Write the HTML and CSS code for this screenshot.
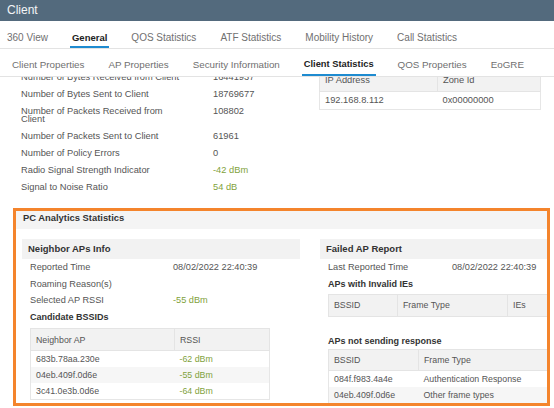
FILE: index.html
```html
<!DOCTYPE html>
<html lang="en">
<head>
<meta charset="utf-8">
<title>Client</title>
<link rel="stylesheet" href="styles.css">
</head>
<body>
<div class="app">
  <div class="titlebar">Client</div>
  <nav class="tabs tabs-main">
    <span class="tab">360 View</span>
    <span class="tab active">General</span>
    <span class="tab">QOS Statistics</span>
    <span class="tab">ATF Statistics</span>
    <span class="tab">Mobility History</span>
    <span class="tab">Call Statistics</span>
  </nav>
  <nav class="tabs tabs-sub">
    <span class="tab">Client Properties</span>
    <span class="tab">AP Properties</span>
    <span class="tab">Security Information</span>
    <span class="tab active">Client Statistics</span>
    <span class="tab">QOS Properties</span>
    <span class="tab">EoGRE</span>
  </nav>
  <div class="content">
    <div class="scroll">
      <div class="top">
        <dl class="stats">
          <div class="stat"><dt>Number of Bytes Received from Client</dt><dd>16441937</dd></div>
          <div class="stat"><dt>Number of Bytes Sent to Client</dt><dd>18769677</dd></div>
          <div class="stat"><dt>Number of Packets Received from Client</dt><dd>108802</dd></div>
          <div class="stat"><dt>Number of Packets Sent to Client</dt><dd>61961</dd></div>
          <div class="stat"><dt>Number of Policy Errors</dt><dd>0</dd></div>
          <div class="stat"><dt>Radio Signal Strength Indicator</dt><dd class="good">-42 dBm</dd></div>
          <div class="stat"><dt>Signal to Noise Ratio</dt><dd class="good">54 dB</dd></div>
        </dl>
        <table class="grid ip-table">
          <thead><tr><th class="c-ip">IP Address</th><th>Zone Id</th></tr></thead>
          <tbody><tr><td>192.168.8.112</td><td>0x00000000</td></tr></tbody>
        </table>
      </div>

      <section class="analytics">
        <div class="analytics-title">PC Analytics Statistics</div>
        <div class="panels">
          <div class="panel panel-left">
            <div class="panel-head">Neighbor APs Info</div>
            <div class="kv"><span class="k">Reported Time</span><span class="v">08/02/2022 22:40:39</span></div>
            <div class="kv"><span class="k">Roaming Reason(s)</span><span class="v"></span></div>
            <div class="kv"><span class="k">Selected AP RSSI</span><span class="v good">-55 dBm</span></div>
            <div class="sub">Candidate BSSIDs</div>
            <table class="grid cand-table">
              <thead><tr><th class="c-nap">Neighbor AP</th><th>RSSI</th></tr></thead>
              <tbody>
                <tr><td>683b.78aa.230e</td><td class="good">-62 dBm</td></tr>
                <tr><td>04eb.409f.0d6e</td><td class="good">-55 dBm</td></tr>
                <tr><td>3c41.0e3b.0d6e</td><td class="good">-64 dBm</td></tr>
              </tbody>
            </table>
          </div>
          <div class="panel panel-right">
            <div class="panel-head">Failed AP Report</div>
            <div class="kv"><span class="k">Last Reported Time</span><span class="v">08/02/2022 22:40:39</span></div>
            <div class="sub">APs with Invalid IEs</div>
            <table class="grid ie-table">
              <thead><tr><th class="c-b1">BSSID</th><th class="c-ft1">Frame Type</th><th>IEs</th></tr></thead>
              <tbody></tbody>
            </table>
            <div class="sub sub-2">APs not sending response</div>
            <table class="grid resp-table">
              <thead><tr><th class="c-b2">BSSID</th><th>Frame Type</th></tr></thead>
              <tbody>
                <tr><td>084f.f983.4a4e</td><td>Authentication Response</td></tr>
                <tr><td>04eb.409f.0d6e</td><td>Other frame types</td></tr>
              </tbody>
            </table>
          </div>
        </div>
      </section>
    </div>
  </div>
</div>
</body>
</html>
```

FILE: styles.css
```css
html, body {
  margin: 0;
  padding: 0;
  background: #ffffff;
}

body {
  font-family: "Liberation Sans", Arial, Helvetica, sans-serif;
  color: #555;
  width: 554px;
  height: 408px;
  overflow: hidden;
}

.titlebar {
  height: 21px;
  line-height: 21px;
  background: #536a7d;
  color: #f3f5f7;
  font-size: 12px;
  padding-left: 7px;
}

.tabs {
  display: flex;
  gap: 20px;
  border-bottom: 1px solid #e3e3e3;
}

.tabs-main {
  padding: 11px 0 0 5px;
}

.tabs-sub {
  padding: 10px 0 0 10px;
}

.tab {
  padding: 0 2px 3px;
  line-height: 11px;
  font-size: 10px;
  color: #707070;
  border-bottom: 2px solid transparent;
  white-space: nowrap;
}

.tabs-sub .tab {
  padding-bottom: 4px;
  font-size: 9.8px;
}

.tab.active {
  color: #222;
  font-weight: bold;
  font-size: 9.5px;
  border-bottom-color: #1e8bd0;
}

.tabs-sub .tab.active {
  font-size: 9.3px;
}

.content {
  display: flow-root;
  height: 331px;
  overflow: hidden;
  padding: 0 4px 0 13px;
}

.scroll {
  margin-top: -8.5px;
}

.top {
  display: flex;
  padding-left: 8px;
}

.stats {
  width: 298px;
  margin: 0;
}

.stat {
  display: grid;
  grid-template-columns: 165px 1fr;
  column-gap: 27px;
  padding: 4.5px 0;
  line-height: 8px;
  font-size: 9.3px;
  color: #555;
}

.stat dt,
.stat dd {
  margin: 0;
}

.good {
  color: #7fa23c;
}

/* tables */
.grid {
  border-collapse: collapse;
  font-size: 8.8px;
  color: #555;
  table-layout: fixed;
}

.grid th {
  background: #f2f2f2;
  font-weight: normal;
  text-align: left;
  height: 21px;
  padding: 0 5px;
  border: 1px solid #e4e4e4;
  white-space: nowrap;
}

.grid td {
  height: 16px;
  padding: 0 5px;
  white-space: nowrap;
}

.grid tbody tr {
  border-left: 1px solid #e6e6e6;
  border-right: 1px solid #e6e6e6;
}

.grid tbody tr:last-child {
  border-bottom: 1px solid #e6e6e6;
}

.grid tbody tr:nth-child(even) td {
  background: #f6f6f6;
}

.ip-table {
  width: 222px;
  font-size: 9.3px;
  align-self: flex-start;
}

.ip-table td {
  height: 17px;
}

.c-ip {
  width: 107px;
}

/* analytics box */
.analytics {
  margin-top: 12.5px;
  height: 198px;
  box-sizing: border-box;
  border: 3px solid #f4842c;
  overflow: hidden;
}

.analytics-title {
  height: 18px;
  box-sizing: border-box;
  padding: 1px 7px 0;
  line-height: 12px;
  background: #f4f4f4;
  font-weight: bold;
  font-size: 9.4px;
  color: #333;
}

.panels {
  display: flex;
  gap: 20px;
  padding: 10px 0 0 6px;
}

.panel {
  flex: 0 0 278px;
}

.panel-head {
  height: 20px;
  line-height: 20px;
  background: #f2f2f2;
  padding-left: 6px;
  font-weight: bold;
  font-size: 9.5px;
  color: #333;
}

.kv {
  display: flex;
  height: 16.5px;
  line-height: 16.5px;
  padding-left: 8px;
  font-size: 9.2px;
  color: #555;
  white-space: nowrap;
}

.panel-left .k {
  width: 143px;
}

.panel-right .k {
  width: 124px;
}

.sub {
  height: 17px;
  line-height: 17px;
  padding-left: 8px;
  font-weight: bold;
  font-size: 9px;
  color: #333;
}

.sub-2 {
  height: 16px;
  line-height: 16px;
}

.cand-table,
.ie-table,
.resp-table {
  margin: 2.5px 0 0 8px;
}

.cand-table {
  width: 240px;
}

.c-nap {
  width: 133px;
}

.ie-table {
  width: 262px;
  margin-top: 1px;
  margin-bottom: 16px;
}

.c-b1 {
  width: 58px;
}

.c-ft1 {
  width: 99px;
}

.resp-table {
  width: 270px;
  margin-top: 0;
}

.resp-table th {
  height: 20px;
}

.c-b2 {
  width: 79px;
}
```
